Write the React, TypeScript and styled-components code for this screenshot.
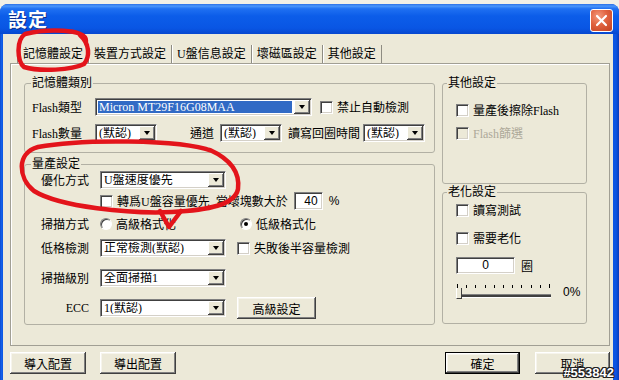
import React from "react"
import styled, { createGlobalStyle } from "styled-components"

const GlobalStyle = createGlobalStyle`
  html, body { margin: 0; padding: 0; background: #f1efe6; }
  body {
    font-family: "Liberation Serif", "Noto Sans CJK TC", serif;
    font-size: 12px;
    color: #000;
  }
`

const Screen = styled.div`
  position: relative;
  width: 619px;
  height: 380px;
  overflow: hidden;
  box-sizing: border-box;
  padding-top: 4px;
  background: #f1efe6;
`

const Window = styled.div`
  display: flex;
  flex-direction: column;
  height: 376px;
  border-radius: 8px 8px 0 0;
  overflow: hidden;
  background: linear-gradient(to right, #0a3fc4 0, #1463ea 1px, #0b55e2 3px, #0b55e2 calc(100% - 3px), #083ab8 100%);
`

const TitleBar = styled.div`
  flex: none;
  height: 30px;
  display: flex;
  align-items: center;
  justify-content: space-between;
  padding: 0 6px 0 8px;
  background: linear-gradient(180deg, #2a6fe6 0%, #4a96fb 7%, #1f70f2 16%, #0c5de9 40%, #0956e4 80%, #0748cf 100%);
`

const Title = styled.span`
  font-family: "Noto Sans CJK TC", sans-serif;
  font-weight: 700;
  font-size: 19px;
  line-height: 22px;
  color: #fff;
  text-shadow: 1px 1px 0 #0a2c8a;
  letter-spacing: 1px;
`

const CloseButton = styled.div`
  width: 21px;
  height: 21px;
  margin-top: 2px;
  display: flex;
  align-items: center;
  justify-content: center;
  border: 1px solid #fff;
  border-radius: 3px;
  background: radial-gradient(circle at 35% 30%, #f49a7c 0%, #e0623f 45%, #c1401f 100%);
`

const Body = styled.div`
  flex: 1;
  display: flex;
  flex-direction: column;
  margin: 0 6px 0 3px;
  background: #ece9d8;
`

const TabRow = styled.div`
  flex: none;
  height: 29px;
  display: flex;
  align-items: flex-end;
  padding-left: 14px;
`

const Tab = styled.div<{ $last?: boolean }>`
  height: 18px;
  line-height: 18px;
  padding: 0 5px;
  border-left: 1px solid #8e8c82;
  box-shadow: inset 1px 0 #fff;
  ${p => (p.$last ? "border-right: 1px solid #8e8c82;" : "")}
  font-family: "Liberation Serif", "Noto Sans CJK TC", serif;
`

const Panel = styled.div`
  flex: none;
  height: 283px;
  box-sizing: border-box;
  margin: 0 3px 0 7px;
  padding: 12px 22px 0 13px;
  border: 1px solid #a19f94;
  box-shadow: inset 1px 1px #fff;
  display: flex;
  gap: 7px;
`

const Column = styled.div<{ $w: number }>`
  width: ${p => p.$w}px;
  flex: none;
  display: flex;
  flex-direction: column;
`

const Group = styled.fieldset<{ $h: number; $mt?: number }>`
  margin: ${p => p.$mt ?? 0}px 0 0 0;
  padding: 0;
  min-width: 0;
  height: ${p => p.$h}px;
  box-sizing: border-box;
  border: 1px solid #b2b0a4;
  border-radius: 3px;
`

const Legend = styled.legend<{ $ml: number }>`
  margin-left: ${p => p.$ml}px;
  padding: 0 1px;
  line-height: 14px;
  font-size: 12px;
`

const Row = styled.div<{ $mt?: number; $pl?: number; $h?: number }>`
  display: flex;
  align-items: center;
  margin-top: ${p => p.$mt ?? 0}px;
  padding-left: ${p => p.$pl ?? 0}px;
  height: ${p => p.$h ?? 18}px;
  white-space: nowrap;
`

const FieldLabel = styled.span<{ $w?: number; $ml?: number; $right?: boolean }>`
  flex: none;
  ${p => (p.$w ? `width: ${p.$w}px;` : "")}
  margin-left: ${p => p.$ml ?? 0}px;
  text-align: ${p => (p.$right ? "right" : "left")};
  ${p => (p.$right ? "margin-right: 11px;" : "")}
`

const ComboBox = styled.div<{ $w: number }>`
  flex: none;
  display: flex;
  width: ${p => p.$w}px;
  height: 18px;
  box-sizing: border-box;
  padding: 1px;
  background: #fff;
  border: 1px solid;
  border-color: #808080 #fff #fff #808080;
  box-shadow: inset 1px 1px #404040, inset -1px -1px #d4d0c8;
`

const ComboValue = styled.span<{ $selected?: boolean }>`
  flex: 1;
  margin: 1px 2px 1px 1px;
  padding-left: 1px;
  line-height: 13px;
  overflow: hidden;
  background: ${p => (p.$selected ? "#316ac5" : "transparent")};
  color: ${p => (p.$selected ? "#fff" : "#000")};
`

const ComboArrow = styled.span`
  flex: none;
  width: 16px;
  display: flex;
  align-items: center;
  justify-content: center;
  background: #ece9d8;
  box-shadow: inset -1px -1px #404040, inset 1px 1px #fff, inset -2px -2px #808080;
  &::after {
    content: "";
    border-left: 3.5px solid transparent;
    border-right: 3.5px solid transparent;
    border-top: 4px solid #000;
  }
`

const CheckWrap = styled.span<{ $ml?: number; $disabled?: boolean }>`
  display: inline-flex;
  align-items: center;
  gap: 4px;
  margin-left: ${p => p.$ml ?? 0}px;
  color: ${p => (p.$disabled ? "#aca899" : "#000")};
`

const Box = styled.span<{ $disabled?: boolean }>`
  flex: none;
  width: 13px;
  height: 13px;
  box-sizing: border-box;
  background: ${p => (p.$disabled ? "#ece9d8" : "#fff")};
  border: 1px solid;
  border-color: #808080 #fff #fff #808080;
  box-shadow: inset 1px 1px #404040, inset -1px -1px #d4d0c8;
`

const RadioDot = styled.span<{ $on?: boolean }>`
  flex: none;
  width: 12px;
  height: 12px;
  box-sizing: border-box;
  border-radius: 50%;
  background: #fff;
  border: 1px solid;
  border-color: #808080 #fff #fff #808080;
  box-shadow: inset 1px 1px #404040;
  display: flex;
  align-items: center;
  justify-content: center;
  &::after {
    content: "";
    width: 4px;
    height: 4px;
    border-radius: 50%;
    background: ${p => (p.$on ? "#000" : "transparent")};
  }
`

const TextBox = styled.span<{ $w: number; $h: number; $ml?: number; $align?: string }>`
  flex: none;
  width: ${p => p.$w}px;
  height: ${p => p.$h}px;
  box-sizing: border-box;
  margin-left: ${p => p.$ml ?? 0}px;
  padding: 0 4px;
  background: #fff;
  border: 1px solid;
  border-color: #808080 #fff #fff #808080;
  box-shadow: inset 1px 1px #404040, inset -1px -1px #d4d0c8;
  font-family: "Liberation Sans", sans-serif;
  font-size: 12px;
  line-height: ${p => p.$h - 2}px;
  text-align: ${p => p.$align ?? "center"};
`

const Unit = styled.span<{ $ml?: number }>`
  margin-left: ${p => p.$ml ?? 0}px;
  font-family: "Liberation Sans", "Noto Sans CJK TC", sans-serif;
`

const Button = styled.div<{ $w: number; $ml?: number; $default?: boolean }>`
  flex: none;
  width: ${p => p.$w}px;
  height: 22px;
  box-sizing: border-box;
  margin-left: ${p => p.$ml ?? 0}px;
  display: flex;
  align-items: center;
  justify-content: center;
  background: #ece9d8;
  border: ${p => (p.$default ? "1px solid #000" : "none")};
  box-shadow: inset -1px -1px #404040, inset 1px 1px #fff, inset -2px -2px #808080, inset 2px 2px #f6f4ec;
  font-family: "Noto Sans CJK TC", sans-serif;
  font-size: 12px;
`

const Slider = styled.div`
  position: relative;
  flex: none;
  width: 95px;
  height: 16px;
`

const Ticks = styled.div`
  height: 4px;
  margin: 0 1px;
  border-left: 1px solid #000;
  border-right: 1px solid #000;
  background: repeating-linear-gradient(to right, transparent 0 8.2px, #000 8.2px 9.2px);
  background-size: 100% 3px;
  background-repeat: no-repeat;
  background-position: 0 1px;
`

const Track = styled.div`
  margin-top: 6px;
  height: 2px;
  border-top: 1px solid #808080;
  border-bottom: 1px solid #fff;
  background: #404040;
`

const Thumb = styled.div`
  position: absolute;
  left: 0;
  top: 4px;
  width: 4px;
  height: 10px;
  background: #ece9d8;
  border-left: 1px solid #fff;
  border-right: 1px solid #404040;
  border-bottom: 1px solid #404040;
`

const BottomBar = styled.div`
  display: flex;
  align-items: center;
  margin-top: 6px;
  padding: 0 3px 0 7px;
`

const Spacer = styled.div`
  flex: 1;
`

const Overlay = styled.svg`
  position: absolute;
  left: 0;
  top: 0;
  pointer-events: none;
`

const Watermark = styled.span`
  position: absolute;
  right: 5px;
  bottom: 1px;
  font-family: "Liberation Sans", sans-serif;
  font-weight: 700;
  font-size: 13px;
  line-height: 13px;
  color: #fff;
  text-shadow: 1px 0 #222, -1px 0 #222, 0 1px #222, 0 -1px #222, 1px 1px #222, -1px -1px #222, 1px -1px #222, -1px 1px #222;
`

const Combo: React.FC<{ w: number; value?: string; selected?: boolean }> = ({ w, value, selected }) => (
  <ComboBox $w={w}>
    <ComboValue $selected={selected}>{value}</ComboValue>
    <ComboArrow />
  </ComboBox>
)

const Check: React.FC<{ label: string; ml?: number; disabled?: boolean }> = ({ label, ml, disabled }) => (
  <CheckWrap $ml={ml} $disabled={disabled}>
    <Box $disabled={disabled} />
    {label}
  </CheckWrap>
)

const Radio: React.FC<{ label: string; on?: boolean; w?: number }> = ({ label, on, w }) => (
  <CheckWrap style={w ? { width: w } : undefined}>
    <RadioDot $on={on} />
    {label}
  </CheckWrap>
)

const tabs = ["記憶體設定", "裝置方式設定", "U盤信息設定", "壞磁區設定", "其他設定"]

export default function App() {
  return (
    <Screen>
      <GlobalStyle />
      <Window>
        <TitleBar>
          <Title>設定</Title>
          <CloseButton>
            <svg width="13" height="13" viewBox="0 0 13 13">
              <path d="M2 2 L11 11 M11 2 L2 11" stroke="#fff" strokeWidth="2.2" strokeLinecap="round" />
            </svg>
          </CloseButton>
        </TitleBar>
        <Body>
          <TabRow>
            {tabs.map((t, i) => (
              <Tab key={t} $last={i === tabs.length - 1}>
                {t}
              </Tab>
            ))}
          </TabRow>
          <Panel>
            <Column $w={411}>
              <Group $h={77}>
                <Legend $ml={6}>記憶體類別</Legend>
                <Row $mt={8} $pl={7}>
                  <FieldLabel $w={63}>Flash類型</FieldLabel>
                  <Combo w={217} value="Micron MT29F16G08MAA" selected />
                  <Check ml={8} label="禁止自動檢測" />
                </Row>
                <Row $mt={8} $pl={7}>
                  <FieldLabel $w={63}>Flash數量</FieldLabel>
                  <Combo w={62} value="(默認)" />
                  <FieldLabel $w={30} $ml={33}>通道</FieldLabel>
                  <Combo w={62} value="(默認)" />
                  <FieldLabel $w={75} $ml={6}>讀寫回圈時間</FieldLabel>
                  <Combo w={62} value="(默認)" />
                </Row>
              </Group>
              <Group $h={168} $mt={4}>
                <Legend $ml={6}>量產設定</Legend>
                <Row>
                  <FieldLabel $w={64} $right>優化方式</FieldLabel>
                  <Combo w={126} value="U盤速度優先" />
                </Row>
                <Row $mt={3} $pl={75}>
                  <Check label="轉爲U盤容量優先, 當壞塊數大於" />
                  <TextBox $w={29} $h={18} $ml={6} $align="right">40</TextBox>
                  <Unit $ml={6}>%</Unit>
                </Row>
                <Row $mt={5}>
                  <FieldLabel $w={64} $right>掃描方式</FieldLabel>
                  <Radio w={140} label="高級格式化" />
                  <Radio on label="低級格式化" />
                </Row>
                <Row $mt={6}>
                  <FieldLabel $w={64} $right>低格檢測</FieldLabel>
                  <Combo w={126} value="正常檢測(默認)" />
                  <Check ml={11} label="失敗後半容量檢測" />
                </Row>
                <Row $mt={12}>
                  <FieldLabel $w={64} $right>掃描級別</FieldLabel>
                  <Combo w={126} value="全面掃描1" />
                </Row>
                <Row $mt={10} $h={22}>
                  <FieldLabel $w={64} $right>ECC</FieldLabel>
                  <Combo w={126} value="1(默認)" />
                  <Button $w={79} $ml={11}>高級設定</Button>
                </Row>
              </Group>
            </Column>
            <Column $w={145}>
              <Group $h={108}>
                <Legend $ml={4}>其他設定</Legend>
                <Row $mt={13} $pl={13} $h={14}>
                  <Check label="量產後擦除Flash" />
                </Row>
                <Row $mt={9} $pl={13} $h={14}>
                  <Check disabled label="Flash篩選" />
                </Row>
              </Group>
              <Group $h={139} $mt={1}>
                <Legend $ml={4}>老化設定</Legend>
                <Row $mt={4} $pl={13} $h={14}>
                  <Check label="讀寫測試" />
                </Row>
                <Row $mt={14} $pl={13} $h={14}>
                  <Check label="需要老化" />
                </Row>
                <Row $mt={12} $pl={13} $h={17}>
                  <TextBox $w={59} $h={17}>0</TextBox>
                  <Unit $ml={6}>圈</Unit>
                </Row>
                <Row $mt={10} $pl={13} $h={16}>
                  <Slider>
                    <Ticks />
                    <Track />
                    <Thumb />
                  </Slider>
                  <Unit $ml={12}>0%</Unit>
                </Row>
              </Group>
            </Column>
          </Panel>
          <BottomBar>
            <Button $w={76}>導入配置</Button>
            <Button $w={76} $ml={14}>導出配置</Button>
            <Spacer />
            <Button $w={75} $default>確定</Button>
            <Button $w={75} $ml={15}>取消</Button>
          </BottomBar>
        </Body>
      </Window>
      <Overlay width="619" height="380" viewBox="0 0 619 380">
        <g fill="none" stroke="#e3141b" strokeWidth="4.5" strokeLinecap="round" strokeLinejoin="round">
          <path d="M86 41 C87 28 45 29 25 34 C16 40 17 61 24 67 C40 72 72 70 84 64 C90 57 90 44 80 35" />
          <path d="M212 151 C180 139 80 139 38 147 C16 153 18 178 34 191 C60 207 130 214 172 212 C208 210 235 205 238 189 C240 173 232 160 210 150" />
          <path d="M160 211 L169 227 L181 211" />
        </g>
      </Overlay>
      <Watermark>#553842</Watermark>
    </Screen>
  )
}
